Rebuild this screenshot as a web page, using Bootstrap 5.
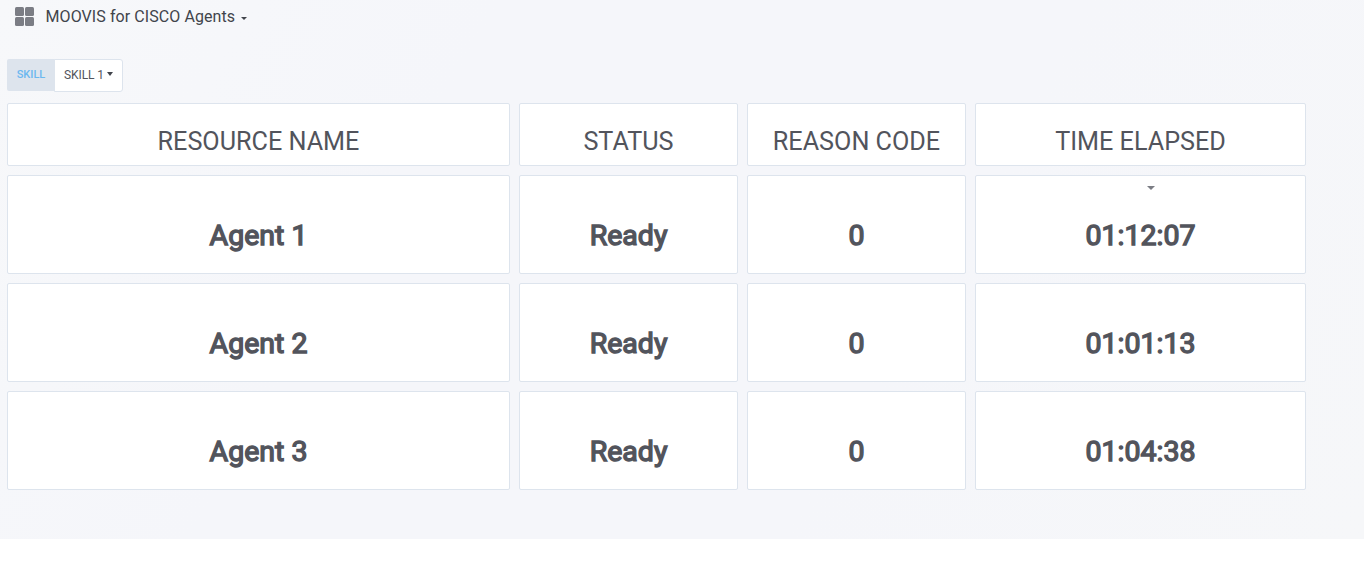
<!DOCTYPE html>
<html lang="en"><head><meta charset="utf-8"><meta name="viewport" content="width=device-width, initial-scale=1">
<title>MOOVIS for CISCO Agents</title>
<link href="https://cdn.jsdelivr.net/npm/bootstrap@5.3.0/dist/css/bootstrap.min.css" rel="stylesheet">
<style>
body{font-family:Roboto,"Liberation Sans",sans-serif;color:#52545c;background:#fff;overflow:hidden}
.dash{height:539px;background:linear-gradient(120deg,#f7f8fa 0,#f5f6fa 30%,#f5f6fa 65%,#f6f7f9 100%)}
.topbar{height:59px;padding:7px 0 0 15px}
.title-text{font-size:16px;line-height:20px;letter-spacing:.08px;margin-left:11.5px;color:#41444b}
.tri{width:0;height:0;border:3px solid transparent;border-top-color:#41444b;border-bottom:0}
.tri-title{margin:10px 0 0 6px}
.tri-skill{border-width:4px 3.5px 0;margin:-2px 0 0 3px}
.skill{height:33px;margin-left:7px;font-size:12px}
.skill-label{width:48px;height:32px;background:#dde4ed;color:#6cb8f0;font-size:11px;font-weight:500;border-radius:2px 0 0 2px}
.skill-value{width:69px;height:33px;margin-left:-1px;padding-bottom:1px;border:1px solid #dde4ed;background:#fff;border-radius:0 3px 3px 0;letter-spacing:-.1px}
.panels{display:grid;grid-template-columns:503px 219px 219px 331px;grid-template-rows:63px 99px 99px 99px;gap:9px;margin:11px 0 0 7px}
.panel{background:#fff;border:1px solid #dde4ed;border-radius:2px;padding-top:43px;font-size:28.5px;line-height:34px;-webkit-text-stroke:1.4px #52545c}
.panel.head{font-size:25.2px;padding-top:21px;-webkit-text-stroke:0}
.sort{position:absolute;top:10px;left:50%;margin-left:6px;border-width:4px 4px 0;border-top-color:#7b7d84}
</style></head><body>
<main class="dash">
<header class="topbar d-flex align-items-start">
<svg width="19" height="19" viewBox="0 0 19 19" fill="#7b7d84"><rect width="9" height="9" rx="1.5"/><rect x="10" width="9" height="9" rx="1.5"/><rect y="10" width="9" height="9" rx="1.5"/><rect x="10" y="10" width="9" height="9" rx="1.5"/></svg>
<span class="title-text">MOOVIS for CISCO Agents</span><i class="tri tri-title"></i>
</header>
<div class="skill d-flex"><span class="skill-label d-flex align-items-center justify-content-center">SKILL</span><span class="skill-value d-flex align-items-center justify-content-center">SKILL 1<i class="tri tri-skill"></i></span></div>
<section class="panels text-center">
<div class="panel head">RESOURCE NAME</div><div class="panel head">STATUS</div><div class="panel head">REASON CODE</div><div class="panel head">TIME ELAPSED</div>
<div class="panel">Agent 1</div><div class="panel">Ready</div><div class="panel">0</div><div class="panel position-relative"><i class="tri sort"></i>01:12:07</div>
<div class="panel">Agent 2</div><div class="panel">Ready</div><div class="panel">0</div><div class="panel">01:01:13</div>
<div class="panel">Agent 3</div><div class="panel">Ready</div><div class="panel">0</div><div class="panel">01:04:38</div>
</section></main>
<script src="https://cdn.jsdelivr.net/npm/bootstrap@5.3.0/dist/js/bootstrap.bundle.min.js"></script>
</body></html>
